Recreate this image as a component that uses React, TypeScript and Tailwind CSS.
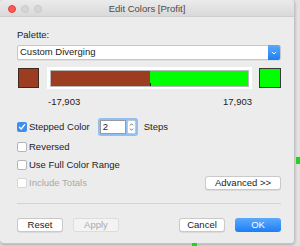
import React from 'react';

const font = { fontFamily: '"Liberation Sans", Arial, sans-serif' };

function Check({ checked, disabled }: { checked?: boolean; disabled?: boolean }) {
  if (checked) {
    return (
      <span className="flex h-[10px] w-[10px] items-center justify-center rounded-[2px] bg-[#3d8ff2]">
        <svg width="8" height="8" viewBox="0 0 8 8">
          <path d="M1.5 4.2 L3.2 6 L6.6 1.6" stroke="white" strokeWidth="1.3" fill="none" strokeLinecap="round" strokeLinejoin="round" />
        </svg>
      </span>
    );
  }
  return (
    <span
      className={
        'h-[10px] w-[10px] rounded-[2px] border bg-white ' +
        (disabled ? 'border-[#d6d6d6] bg-[#f3f3f3]' : 'border-[#b5b5b5]')
      }
    />
  );
}

function Btn({ label, disabled, primary, w = 'w-[46px]' }: { label: string; disabled?: boolean; primary?: boolean; w?: string }) {
  if (primary) {
    return (
      <div className={`${w} flex h-[14px] items-center justify-center rounded-[3px] bg-gradient-to-b from-[#5aa9fb] to-[#1b7df6] text-white`}>
        {label}
      </div>
    );
  }
  return (
    <div
      className={
        `${w} flex h-[14px] items-center justify-center rounded-[3px] border ` +
        (disabled
          ? 'border-[#dcdcdc] bg-[#f3f3f3] text-[#aaaaaa]'
          : 'border-[#c9c9c9] bg-white text-[#1c1c1c] shadow-[0_0.5px_0.5px_rgba(0,0,0,0.15)]')
      }
    >
      {label}
    </div>
  );
}

export default function App() {
  return (
    <div className="relative h-[246px] w-[300px] overflow-hidden bg-[#e2e2e2] text-[9.5px] text-[#1c1c1c]" style={font}>
      {/* background bits peeking from behind the dialog */}
      <div className="absolute left-[296px] top-[157px] h-[7px] w-[4px] bg-[#21d321]" />
      <div className="absolute left-[192px] top-[243px] h-[3px] w-[5px] bg-[#21d321]" />

      <div className="flex h-[244px] w-[295px] flex-col overflow-hidden rounded-[4px] border-r border-b border-[#c4c4c4] bg-[#ececec] shadow-[0_1px_3px_rgba(0,0,0,0.25)]">
        {/* title bar */}
        <div className="relative flex h-[17px] items-center justify-center border-b border-[#cfcfcf] bg-gradient-to-b from-[#ebebeb] to-[#d9d9d9]">
          <div className="absolute left-[8px] top-[5px] flex gap-[5px]">
            <span className="h-[8px] w-[8px] rounded-full border border-[#e0443e] bg-[#fc5753]" />
            <span className="h-[8px] w-[8px] rounded-full border border-[#c9c9c9] bg-[#d6d6d6]" />
            <span className="h-[8px] w-[8px] rounded-full border border-[#c9c9c9] bg-[#d6d6d6]" />
          </div>
          <span className="pt-[2px] text-[9.5px] text-[#4a4a4a]">Edit Colors [Profit]</span>
        </div>

        <div className="flex flex-col pl-[17px] pr-[13px]">
          <div className="mt-[12px] h-[12px] leading-[12px]">Palette:</div>

          {/* palette select */}
          <div className="mt-[4px] flex h-[15px] items-center rounded-[2px] border border-[#c7c7c7] bg-white shadow-[0_0.5px_0.5px_rgba(0,0,0,0.1)]">
            <span className="flex-1 pl-[2px]">Custom Diverging</span>
            <div className="flex h-[15px] w-[12px] items-center justify-center rounded-r-[2px] bg-gradient-to-b from-[#5aa9fb] to-[#1b7df6]">
              <svg width="6" height="4" viewBox="0 0 6 4">
                <path d="M0.8 0.8 L3 3 L5.2 0.8" stroke="white" strokeWidth="1" fill="none" />
              </svg>
            </div>
          </div>

          {/* colour ramp */}
          <div className="mt-[7px] flex h-[22px] items-center">
            <div className="ml-[1px] h-[20px] w-[21px] border border-[#3b2b22] bg-[#9c3d22]" />
            <div className="ml-[8px] flex h-[22px] w-[205px] items-center bg-white px-[3px]">
              <div className="relative flex h-[17px] w-full border border-[#b9b9b9]">
                <div className="h-full w-1/2 bg-[#9c3d22]" />
                <div className="h-full w-1/2 bg-[#00ff00]" />
                <div className="absolute bottom-0 left-1/2 h-[3px] w-[1px] bg-[#222]" />
              </div>
            </div>
            <div className="ml-[7px] h-[20px] w-[22px] border border-[#3a3a3a] bg-[#00ff00]" />
          </div>

          <div className="mt-[7px] ml-[31px] flex h-[12px] w-[204px] justify-between leading-[12px]">
            <span>-17,903</span>
            <span>17,903</span>
          </div>

          {/* stepped color */}
          <div className="mt-[10px] flex h-[18px] items-center">
            <Check checked />
            <span className="ml-[2px]">Stepped Color</span>
            <div className="ml-[8px] flex h-[18px] w-[40px] items-center rounded-[3px] bg-[#8fbff5] p-[2px]">
              <div className="flex h-full flex-1 items-center border border-[#9a9a9a] bg-white pl-[2px]">2</div>
              <div className="ml-[1px] flex h-full w-[9px] flex-col items-center justify-center rounded-[2px] border border-[#c7c7c7] bg-white">
                <svg width="5" height="10" viewBox="0 0 5 10">
                  <path d="M0.8 3.5 L2.5 1.8 L4.2 3.5" stroke="#555" strokeWidth="0.8" fill="none" />
                  <path d="M0.8 6.5 L2.5 8.2 L4.2 6.5" stroke="#555" strokeWidth="0.8" fill="none" />
                </svg>
              </div>
            </div>
            <span className="ml-[6px]">Steps</span>
          </div>

          <div className="mt-[3px] flex h-[16px] items-center gap-[2px]">
            <Check />
            <span>Reversed</span>
          </div>

          <div className="mt-[2px] flex h-[16px] items-center gap-[2px]">
            <Check />
            <span>Use Full Color Range</span>
          </div>

          <div className="mt-[2px] flex h-[16px] items-center">
            <Check disabled />
            <span className="ml-[2px] flex-1 text-[#a9a9a9]">Include Totals</span>
            <Btn label="Advanced >>" w="w-[76px]" />
          </div>

          <div className="mt-[12px] h-px bg-[#d3d3d3]" />

          <div className="mt-[14px] flex h-[14px] items-center">
            <Btn label="Reset" />
            <div className="ml-[10px]">
              <Btn label="Apply" disabled />
            </div>
            <div className="flex-1" />
            <Btn label="Cancel" />
            <div className="ml-[10px]">
              <Btn label="OK" primary />
            </div>
          </div>
        </div>
      </div>
    </div>
  );
}
